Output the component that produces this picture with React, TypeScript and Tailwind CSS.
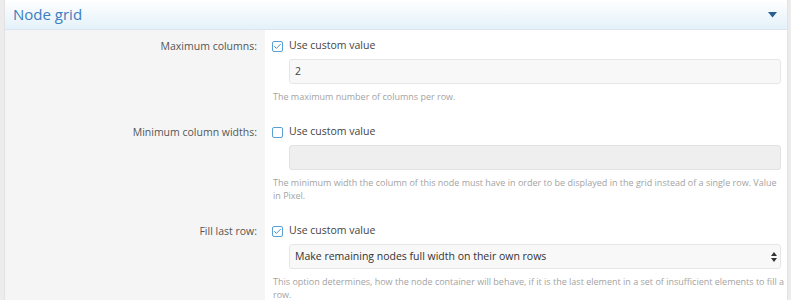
import { Check } from 'lucide-react'

type RowProps = {
  label: string
  checked: boolean
  children: React.ReactNode
  help: React.ReactNode
}

function Checkbox({ checked }: { checked: boolean }) {
  return (
    <span className="flex h-[11px] w-[11px] items-center justify-center rounded-[2px] border border-[#5a9fd4] bg-white">
      {checked && <Check className="h-[9px] w-[9px] text-[#3a86c8]" strokeWidth={2.5} />}
    </span>
  )
}

function Row({ label, checked, children, help }: RowProps) {
  return (
    <div className="flex">
      <div className="w-[260px] shrink-0 bg-[#f5f5f5] pr-2 pt-2 text-right text-[10.5px] leading-4 text-[#555]">
        {label}
      </div>
      <div className="flex-1 bg-white pb-[13px] pl-[7px] pr-[6px] pt-2">
        <div className="flex h-4 items-center gap-[6px]">
          <Checkbox checked={checked} />
          <span className="text-[10.5px] text-[#444]">Use custom value</span>
        </div>
        <div className="mt-[5px] pl-[17px]">{children}</div>
        <div className="mr-[-4px] mt-[6px] pl-px text-[9px] leading-[13px] text-[#a3a3a3]">{help}</div>
      </div>
    </div>
  )
}

export default function App() {
  return (
    <div className="h-[300px] w-[791px] overflow-hidden bg-[#ececec] pl-1 pr-[3px] font-['Open_Sans',sans-serif]">
      <div className="border-x border-[#e3e3e3]">
        <div className="flex h-[30px] items-center justify-between border-b border-[#dce6ee] bg-gradient-to-b from-white to-[#e4f1fa] pl-[8px] pr-[10px]">
          <span className="text-[15px] text-[#3c7ebf]">Node grid</span>
          <svg width="9" height="6" viewBox="0 0 9 6" className="mt-px">
            <path d="M0 0 L9 0 L4.5 5.5 Z" fill="#2a5f93" />
          </svg>
        </div>
        <Row
          label="Maximum columns:"
          checked
          help="The maximum number of columns per row."
        >
          <div className="flex h-[25px] items-center rounded-[3px] border border-[#e6e6e6] bg-[#f8f8f8] px-[5px] text-[10.5px] text-[#444]">
            2
          </div>
        </Row>
        <Row
          label="Minimum column widths:"
          checked={false}
          help="The minimum width the column of this node must have in order to be displayed in the grid instead of a single row. Value in Pixel."
        >
          <div className="h-[25px] rounded-[3px] border border-[#e2e2e2] bg-[#efefef]" />
        </Row>
        <Row
          label="Fill last row:"
          checked
          help="This option determines, how the node container will behave, if it is the last element in a set of insufficient elements to fill a row."
        >
          <div className="flex h-[25px] items-center justify-between rounded-[3px] border border-[#e6e6e6] bg-[#f8f8f8] pl-[5px] pr-[3px] text-[10.5px] text-[#333]">
            <span>Make remaining nodes full width on their own rows</span>
            <svg width="6" height="10" viewBox="0 0 6 10">
              <path d="M0 4 L3 0 L6 4 Z M0 6 L3 10 L6 6 Z" fill="#333" />
            </svg>
          </div>
        </Row>
      </div>
    </div>
  )
}
